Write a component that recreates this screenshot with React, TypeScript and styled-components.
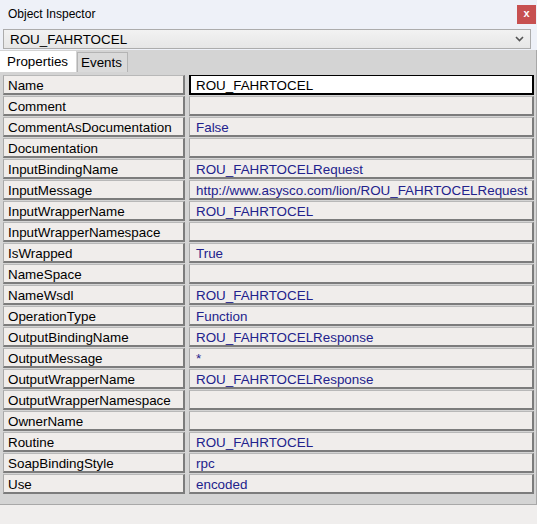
import React from "react";
import styled, { createGlobalStyle } from "styled-components";

const GlobalStyle = createGlobalStyle`
  html, body {
    margin: 0;
    padding: 0;
    background: #f0eeed;
  }
  * {
    box-sizing: border-box;
  }
`;

type Prop = { name: string; value: string; editing?: boolean };

const props: Prop[] = [
  { name: "Name", value: "ROU_FAHRTOCEL", editing: true },
  { name: "Comment", value: "" },
  { name: "CommentAsDocumentation", value: "False" },
  { name: "Documentation", value: "" },
  { name: "InputBindingName", value: "ROU_FAHRTOCELRequest" },
  { name: "InputMessage", value: "http://www.asysco.com/lion/ROU_FAHRTOCELRequest" },
  { name: "InputWrapperName", value: "ROU_FAHRTOCEL" },
  { name: "InputWrapperNamespace", value: "" },
  { name: "IsWrapped", value: "True" },
  { name: "NameSpace", value: "" },
  { name: "NameWsdl", value: "ROU_FAHRTOCEL" },
  { name: "OperationType", value: "Function" },
  { name: "OutputBindingName", value: "ROU_FAHRTOCELResponse" },
  { name: "OutputMessage", value: "*" },
  { name: "OutputWrapperName", value: "ROU_FAHRTOCELResponse" },
  { name: "OutputWrapperNamespace", value: "" },
  { name: "OwnerName", value: "" },
  { name: "Routine", value: "ROU_FAHRTOCEL" },
  { name: "SoapBindingStyle", value: "rpc" },
  { name: "Use", value: "encoded" },
];

const App = () => {
  return (
    <Window>
      <GlobalStyle />
      <TitleBar>
        <Title>Object Inspector</Title>
        <CloseButton>x</CloseButton>
      </TitleBar>
      <ComboRow>
        <Combo>
          <span>ROU_FAHRTOCEL</span>
          <svg width="9" height="6" viewBox="0 0 9 6">
            <path d="M1 1 L4.5 4.5 L8 1" stroke="#555" strokeWidth="1.6" fill="none" />
          </svg>
        </Combo>
      </ComboRow>
      <Panel>
        <TabStrip>
          <Tab active>Properties</Tab>
          <Tab>Events</Tab>
        </TabStrip>
        <Grid>
          {props.map((p) => (
            <React.Fragment key={p.name}>
              <NameCell>{p.name}</NameCell>
              <ValueCell editing={p.editing}>{p.value}</ValueCell>
            </React.Fragment>
          ))}
        </Grid>
      </Panel>
      <StatusArea />
    </Window>
  );
};

const Window = styled.div`
  width: 537px;
  height: 524px;
  display: flex;
  flex-direction: column;
  background: #f0eeed;
  font-family: "Liberation Sans", Arial, sans-serif;
  font-size: 13.4px;
  color: #000;
  overflow: hidden;
`;

const TitleBar = styled.div`
  height: 28px;
  display: flex;
  align-items: center;
  justify-content: space-between;
  padding: 0 1px 0 8px;
  background: #eef1f8;
`;

const Title = styled.div`
  font-size: 12px;
  color: #000;
`;

const CloseButton = styled.div`
  width: 19px;
  height: 19px;
  display: flex;
  align-items: center;
  justify-content: center;
  background: #c75050;
  color: #fff;
  font-size: 11px;
  font-weight: bold;
  line-height: 1;
  padding-bottom: 2px;
`;

const ComboRow = styled.div`
  padding: 1px 6px 1px 3px;
  background: #eef1f8;
`;

const Combo = styled.div`
  height: 20px;
  border: 1px solid #acacac;
  background: linear-gradient(#f2f2f2, #e6e6e6);
  display: flex;
  align-items: center;
  justify-content: space-between;
  padding: 0 6px 0 6px;
  font-size: 13.4px;
`;

const Panel = styled.div`
  background: #d4d4d4;
  border-right: 1px solid #a8a8a8;
  border-bottom: 1px solid #a8a8a8;
  padding-bottom: 10px;
`;

const TabStrip = styled.div`
  display: flex;
  align-items: flex-end;
  height: 22px;
`;

const Tab = styled.div<{ active?: boolean }>`
  height: ${(p) => (p.active ? "21px" : "20px")};
  display: flex;
  align-items: center;
  padding: ${(p) => (p.active ? "0 8px 0 7px" : "0 5px 0 3px")};
  background: ${(p) => (p.active ? "#ffffff" : "#dadada")};
  border: ${(p) => (p.active ? "none" : "1px solid #b4b4b4")};
  border-bottom: none;
  margin-left: ${(p) => (p.active ? "0" : "1px")};
  font-size: 13.4px;
`;

const Grid = styled.div`
  display: grid;
  grid-template-columns: 182px 345px;
  column-gap: 4px;
  row-gap: 1px;
  padding: 3px 0 0 3px;
`;

const Cell = styled.div`
  height: 20px;
  display: flex;
  align-items: center;
  padding-top: 2px;
  background: #f0edeb;
  border-top: 1px solid #b8b8b8;
  border-left: 1px solid #a8a8a8;
  border-right: 2px solid #7c7c7c;
  border-bottom: 2px solid #7c7c7c;
  white-space: nowrap;
  overflow: hidden;
  font-size: 13.4px;
`;

const NameCell = styled(Cell)`
  padding-left: 4px;
  color: #000;
`;

const ValueCell = styled(Cell)<{ editing?: boolean }>`
  padding-left: ${(p) => (p.editing ? "5px" : "6px")};
  color: ${(p) => (p.editing ? "#000" : "#22228c")};
  ${(p) =>
    p.editing &&
    `
    background: #ffffff;
    border: 2px solid #000;
    border-top-width: 1px;
  `}
`;

const StatusArea = styled.div`
  flex: 1;
  background: #f0eeed;
`;

export default App;
